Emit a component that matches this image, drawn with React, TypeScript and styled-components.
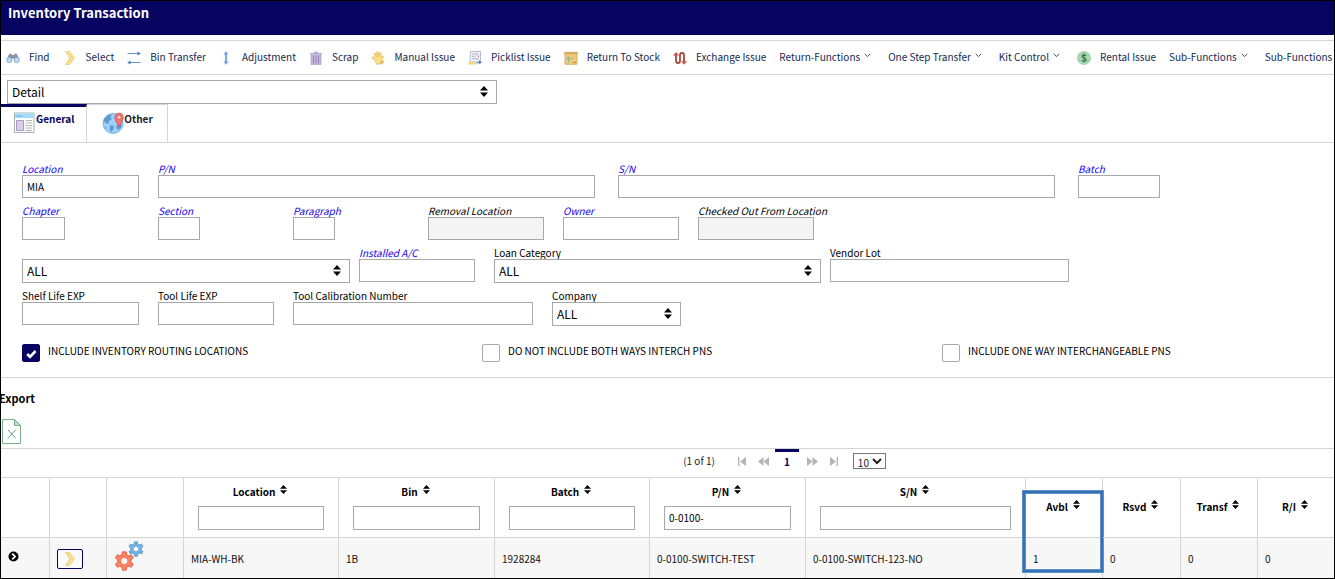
import React, { useId } from "react";
import styled, { createGlobalStyle, css } from "styled-components";

const navy = "#070361";
const line = "#d5d5d5";
const fieldBorder = "#a8a8ac";
const fontStack = `"Noto Sans CJK SC", "Open Sans", sans-serif`;

const GlobalStyle = createGlobalStyle`
  *, *::before, *::after { box-sizing: border-box; }
  body {
    margin: 0;
    background: #fff;
    color: #000;
    font: 10px/12px ${fontStack};
  }
  input, select, button { font: inherit; color: inherit; margin: 0; }
`;

const Frame = styled.div`
  border: 1px solid #000;
  overflow: hidden;
`;

const TitleBar = styled.header`
  height: 34px;
  padding: 3px 7px;
  background: ${navy};
`;

const Title = styled.h1`
  margin: 0;
  color: #fff;
  font-size: 13px;
  line-height: 18px;
  font-weight: 700;
`;

/* Toolbar */

const Toolbar = styled.nav`
  display: flex;
  align-items: center;
  height: 35px;
  margin-top: 5px;
  padding-left: 5px;
  border-top: 1px solid ${line};
  border-bottom: 1px solid ${line};
  overflow: hidden;
`;

const ToolButton = styled.button<{ $menu?: boolean }>`
  display: flex;
  flex: none;
  align-items: center;
  gap: ${(p) => (p.$menu ? 4 : 9)}px;
  padding: 0;
  margin-right: ${(p) => (p.$menu ? 17 : 13)}px;
  border: 0;
  background: none;
  color: #16294f;
  font-size: 10px;
  line-height: 14px;
  white-space: nowrap;
  cursor: pointer;
`;

const ToolLabel = styled.span`
  padding-bottom: 1px;
`;

const MenuChevron = styled.svg`
  width: 7px;
  height: 5px;
  margin-bottom: 4px;
`;

/* Form controls */

const SelectBox = styled.div`
  position: relative;
  width: 100%;
`;

const SelectInput = styled.select`
  display: block;
  width: 100%;
  height: 24px;
  padding: 0 24px 0 4px;
  border: 1px solid ${fieldBorder};
  border-radius: 0;
  background: #fff;
  appearance: none;
  font-size: 12px;
  line-height: 22px;
`;

const SelectArrows = styled.svg`
  position: absolute;
  top: 6px;
  right: 9px;
  width: 8px;
  height: 11px;
  pointer-events: none;
`;

const DetailRow = styled.div`
  max-width: 496px;
  padding: 5px 0 0 6px;
`;

const TextInput = styled.input<{ $tall?: boolean }>`
  display: block;
  width: 100%;
  height: ${(p) => (p.$tall ? 24 : 23)}px;
  padding: 0 4px;
  border: 1px solid ${fieldBorder};
  border-radius: 0;
  background: #fff;
  font-size: 10px;
  font-weight: 400;
  &:disabled { background: #f4f4f4; }
`;

/* Tabs */

const Tabs = styled.div`
  display: flex;
  height: 39px;
  border-bottom: 1px solid ${line};
`;

const Tab = styled.button<{ $active?: boolean }>`
  display: flex;
  align-items: flex-start;
  gap: ${(p) => (p.$active ? 1 : 0)}px;
  padding: ${(p) => (p.$active ? "5px 12px 0 13px" : "7px 14px 0 15px")};
  border: 0;
  border-top: ${(p) => (p.$active ? `3px solid ${navy}` : `1px solid ${line}`)};
  border-right: 1px solid ${line};
  background: #fff;
  color: ${(p) => (p.$active ? navy : "#222")};
  font-size: 10px;
  font-weight: 700;
  line-height: 14px;
  cursor: pointer;
`;

const TabIcon = styled.svg<{ $size: number }>`
  flex: none;
  width: ${(p) => p.$size}px;
  height: ${(p) => p.$size}px;
`;

/* Search form */

const Form = styled.form`
  display: flex;
  flex-direction: column;
  gap: 7px;
  padding: 20px 0 15px 21px;
  border-bottom: 1px solid ${line};
`;

const FormRow = styled.div<{ $cols: number[] }>`
  display: grid;
  grid-template-columns: ${(p) => p.$cols.map((c) => `minmax(0, ${c}fr)`).join(" ")};
  align-items: start;
`;

const FieldCell = styled.div<{ $gap?: number }>`
  padding-right: ${(p) => p.$gap ?? 0}px;
`;

const FieldLabel = styled.label<{ $kind: LabelKind }>`
  display: block;
  height: 12px;
  line-height: 12px;
  white-space: nowrap;
  ${(p) => p.$kind !== "plain" && css`font-style: italic;`}
  ${(p) => p.$kind === "link" && css`color: #1400f0;`}
`;

const CheckRow = styled(FormRow)`
  margin-top: 11px;
`;

const CheckLabel = styled.label`
  display: flex;
  align-items: center;
  gap: 8px;
  line-height: 14px;
  white-space: nowrap;
`;

const CheckText = styled.span`
  padding-bottom: 4px;
`;

const CheckHolder = styled.span`
  position: relative;
  width: 18px;
  height: 18px;
`;

const CheckInput = styled.input`
  display: block;
  width: 18px;
  height: 18px;
  border: 1px solid ${fieldBorder};
  border-radius: 2px;
  background: #fff;
  appearance: none;
  &:checked { background: ${navy}; border-color: ${navy}; }
  &:not(:checked) + svg { display: none; }
`;

const CheckMark = styled.svg`
  position: absolute;
  top: 5px;
  left: 4px;
  width: 11px;
  height: 10px;
  pointer-events: none;
`;

/* Export */

const ExportSection = styled.section`
  height: 71px;
  padding-top: 11px;
  border-bottom: 1px solid ${line};
`;

const ExportTitle = styled.h2`
  margin: 0 0 0 -2px;
  font-size: 11px;
  line-height: 18px;
  font-weight: 700;
`;

const ExportButton = styled.button`
  display: block;
  margin-top: 12px;
  padding: 0 0 0 1px;
  border: 0;
  background: none;
  cursor: pointer;
  svg { display: block; width: 19px; height: 25px; }
`;

/* Paginator */

const Pager = styled.div`
  display: flex;
  justify-content: center;
  align-items: center;
  height: 29px;
  padding-left: 234px;
  border-bottom: 1px solid ${line};
  color: #222;
`;

const PagerStatus = styled.span`
  margin-right: 17px;
  padding-bottom: 5px;
`;

const PagerButton = styled.button`
  display: flex;
  justify-content: center;
  width: 21px;
  padding: 0 0 4px;
  border: 0;
  background: none;
  svg { width: 11px; height: 9px; }
`;

const PageNumber = styled.button`
  width: 24px;
  height: 28px;
  margin: 0 3px 0 1px;
  padding: 0 0 6px;
  border: 0;
  border-top: 3px solid ${navy};
  background: none;
  color: ${navy};
  font-weight: 700;
`;

const PageSize = styled.select`
  width: 33px;
  height: 16px;
  margin: 0 0 4px 9px;
  padding: 0;
  border: 1px solid #767676;
  border-radius: 0;
  background: #fff;
  font-size: 10px;
  line-height: 14px;
`;

/* Results table */

const Table = styled.table`
  width: 100%;
  table-layout: fixed;
  border-collapse: separate;
  border-spacing: 0;
`;

const Col = styled.col<{ $w: number }>`
  width: ${(p) => p.$w}px;
`;

const HeadCell = styled.th`
  position: relative;
  height: 60px;
  padding: 0 14px 2px;
  border-right: 1px solid ${line};
  border-bottom: 1px solid ${line};
  vertical-align: middle;
  &:last-child { border-right: 0; }
`;

const HeadTitle = styled.div`
  display: flex;
  justify-content: center;
  gap: 5px;
  padding-right: 2px;
  font-size: 10px;
  line-height: 16px;
  font-weight: 700;
  svg { flex: none; width: 7px; height: 9px; margin-top: 1px; }
  & + input { margin-top: 6px; }
`;

const Cell = styled.td`
  height: 40px;
  padding: 2px 7px 0;
  border-right: 1px solid ${line};
  background: #f7f7f7;
  color: #111;
  white-space: nowrap;
  vertical-align: middle;
  svg { display: block; }
  &:last-child { border-right: 0; }
`;

const IconCell = styled(Cell)`
  padding-top: 0;
`;

const ExpandButton = styled.button`
  display: block;
  padding: 0 0 3px;
  border: 0;
  background: none;
`;

const SelectRowButton = styled.button`
  display: flex;
  align-items: center;
  justify-content: center;
  width: 26px;
  height: 20px;
  margin-top: 2px;
  padding: 0;
  border: 1px solid ${navy};
  border-radius: 2px;
  background: #fafafa;
`;

const GearsIcon = styled.svg`
  width: 29px;
  height: 30px;
  margin: 0 0 5px 1px;
`;

const Highlight = styled.div`
  position: absolute;
  top: 13px;
  left: -3px;
  right: -1px;
  height: 81px;
  border: 2px solid #3571b3;
  box-shadow: 0 0 0 1px #5d92c8, inset 0 0 0 1px #5d92c8;
  pointer-events: none;
`;

type LabelKind = "plain" | "italic" | "link";

const UpDown = () => (
  <path d="M4 0 L8 4.5 H0 Z M0 6.5 H8 L4 11 Z" fill="#000" />
);

const SortIcon = () => (
  <svg viewBox="0 0 8 11" aria-hidden="true" preserveAspectRatio="none"><UpDown /></svg>
);

function Select({ id, label, value }: { id?: string; label?: string; value: string }) {
  return (
    <SelectBox>
      <SelectInput id={id} aria-label={label} defaultValue={value}>
        <option>{value}</option>
      </SelectInput>
      <SelectArrows viewBox="0 0 8 11" aria-hidden="true"><UpDown /></SelectArrows>
    </SelectBox>
  );
}

interface FieldProps {
  label: string;
  kind?: LabelKind;
  gap?: number;
  value?: string;
  select?: boolean;
  hiddenLabel?: boolean;
  disabled?: boolean;
}

function Field({ label, kind = "plain", gap, value, select, hiddenLabel, disabled }: FieldProps) {
  const id = useId();
  return (
    <FieldCell $gap={gap}>
      <FieldLabel htmlFor={id} $kind={kind}>{hiddenLabel ? "" : label}</FieldLabel>
      {select ? (
        <Select id={id} label={hiddenLabel ? label : undefined} value={value ?? ""} />
      ) : (
        <TextInput id={id} type="text" defaultValue={value} disabled={disabled} />
      )}
    </FieldCell>
  );
}

function Check({ label, checked }: { label: string; checked?: boolean }) {
  return (
    <CheckLabel>
      <CheckHolder>
        <CheckInput type="checkbox" defaultChecked={checked} />
        <CheckMark viewBox="0 0 11 10" aria-hidden="true">
          <path d="M1.2 5 L4 7.8 L9.6 2" fill="none" stroke="#fff" strokeWidth="2.6" />
        </CheckMark>
      </CheckHolder>
      <CheckText>{label}</CheckText>
    </CheckLabel>
  );
}

/* Icons */

const ChevronArrow = () => (
  <svg width="14" height="14" viewBox="0 0 14 14" aria-hidden="true">
    <path d="M2.5 .5 H6.5 L11.5 7 L6.5 13.5 H2.5 L6.8 7 Z" fill="#fbe08b" stroke="#e6c878" strokeWidth=".8" />
  </svg>
);

const icons: Record<string, React.ReactNode> = {
  find: (
    <>
      <path d="M.8 8 L3 3.2 Q4 2 5.4 3 L6.2 4 H7.8 L8.6 3 Q10 2 11 3.2 L13.2 8 L8.5 9 L7.8 7.5 H6.2 L5.5 9 Z" fill="#8495a8" />
      <circle cx="3.3" cy="9" r="2.7" fill="#b8dcf5" stroke="#7d9ab5" strokeWidth=".7" />
      <circle cx="10.7" cy="9" r="2.7" fill="#b8dcf5" stroke="#7d9ab5" strokeWidth=".7" />
    </>
  ),
  transfer: (
    <>
      <path d="M.5 2.5 H11 M3 11.5 H13.5" stroke="#6c93cb" strokeWidth="1" />
      <path d="M10.5 .5 L13.8 2.5 L10.5 4.5 Z M3.5 9.5 L.2 11.5 L3.5 13.5 Z" fill="#4f78b8" />
    </>
  ),
  adjust: (
    <path d="M7 0 L9.6 3.4 H8 V10.6 H9.6 L7 14 L4.4 10.6 H6 V3.4 H4.4 Z" fill="#78a9e3" />
  ),
  trash: (
    <>
      <path d="M1 2 H5 V.8 H9 V2 H13 V3.6 H1 Z" fill="#b5a5cf" />
      <path d="M2 4 H12 V13.6 H2 Z" fill="#c5b6dc" stroke="#a896c4" strokeWidth=".6" />
      <path d="M4.5 5 V12.5 M7 5 V12.5 M9.5 5 V12.5" stroke="#9582b5" strokeWidth=".9" />
    </>
  ),
  hand: (
    <>
      <path d="M4 10 L.8 6.8 Q.9 5.6 2.1 6 L3.9 7.4 L3.2 2.6 Q3.8 1.5 4.7 2.5 L5.6 5.8 L5.7 .9 Q6.5 0 7.2 1 L7.6 5.8 L8.8 1.7 Q9.8 1.1 10.2 2.2 L9.7 6.8 L11.4 4.8 Q12.5 4.7 12.4 5.8 L10.6 10.8 L8.5 13.2 H5.6 Z" fill="#fbe08b" stroke="#dcb75c" strokeWidth=".7" />
      <path d="M8.5 12.8 L11 9.5 L13.6 10.2 L11 13.6 Z" fill="#e3b871" />
    </>
  ),
  picklist: (
    <>
      <path d="M2.5 .5 H12.5 V11 H1.8 Z" fill="#f1f3fa" stroke="#a7afc4" strokeWidth=".8" />
      <path d="M4 3 H7.5 M4 5.3 H7.5 M4 7.6 H7.5" stroke="#9ea6bd" strokeWidth=".8" />
      <path d="M9 2 V4 M10.5 4.5 V6.5 M9 7 V9" stroke="#b27da4" strokeWidth="1" />
      <path d="M.5 11 H8 V13.6 H.5 Z" fill="#f6d77d" />
      <path d="M8 13 Q8.5 10.5 11 10.5 V9 L14 11.2 L11 13.4 V12 Q9.5 12 8 13 Z" fill="#5688cc" />
    </>
  ),
  stock: (
    <>
      <path d="M1 2 H13 V13.3 H1 Z" fill="#f0c87a" stroke="#d0a65c" strokeWidth=".8" />
      <path d="M.3 .8 H13.7 V3.2 H.3 Z" fill="#d6ab62" />
      <path d="M4.5 5 L2 8.3 H4 V11.5 H5.2 V8.3 H9 V7.2 H5.5 Z" fill="#86bd90" />
      <path d="M9.5 11.3 H11.8" stroke="#a97834" strokeWidth="1" />
    </>
  ),
  exchange: (
    <>
      <path d="M3 3 V10 Q3 12 5 12 Q7 12 7 10 V4 Q7 2 9 2 Q11 2 11 4 V11" fill="none" stroke="#a9463f" strokeWidth="1.8" />
      <path d="M0 4.4 L3 1 L6 4.4 Z M8.2 10.2 L11 13.8 L14 10.2 Z" fill="#cf5148" />
    </>
  ),
  rental: (
    <>
      <circle cx="7" cy="7" r="6.6" fill="#a8d7b0" stroke="#83c091" strokeWidth=".8" strokeDasharray="1 .6" />
      <path d="M9.2 4.8 Q8.5 3.9 7 3.9 Q5 3.9 5 5.4 Q5 6.6 7 7 Q9.2 7.4 9.2 8.7 Q9.2 10.2 7 10.2 Q5.4 10.2 4.7 9.2 M7 2.6 V11.4" fill="none" stroke="#32764c" strokeWidth="1.1" />
    </>
  ),
};

const gearPath = (cx: number, cy: number, teeth: number, outer: number, root: number) => {
  const points: string[] = [];
  for (let i = 0; i < teeth; i += 1) {
    const mid = (i / teeth) * Math.PI * 2 - Math.PI / 2;
    [[-0.34, root], [-0.2, outer], [0.2, outer], [0.34, root]].forEach(([offset, r]) => {
      points.push(`${(cx + Math.cos(mid + offset) * r).toFixed(2)} ${(cy + Math.sin(mid + offset) * r).toFixed(2)}`);
    });
  }
  return `M${points.join("L")}Z`;
};

const Gears = () => (
  <GearsIcon viewBox="0 0 29 30" aria-hidden="true">
    <path d={gearPath(21, 8, 6, 7.4, 5.3)} fill="#6fb4e3" stroke="#5695c4" strokeWidth=".8" />
    <circle cx="21" cy="8" r="2.8" fill="#f7f7f7" stroke="#5695c4" strokeWidth=".6" />
    <path d={gearPath(9.3, 20, 6, 9.4, 6.8)} fill="#fb8262" stroke="#e45c41" strokeWidth=".9" />
    <circle cx="9.3" cy="20" r="3.6" fill="#f7f7f7" stroke="#e45c41" strokeWidth=".7" />
  </GearsIcon>
);

const tools: { label: string; icon?: string }[] = [
  { label: "Find", icon: "find" },
  { label: "Select", icon: "select" },
  { label: "Bin Transfer", icon: "transfer" },
  { label: "Adjustment", icon: "adjust" },
  { label: "Scrap", icon: "trash" },
  { label: "Manual Issue", icon: "hand" },
  { label: "Picklist Issue", icon: "picklist" },
  { label: "Return To Stock", icon: "stock" },
  { label: "Exchange Issue", icon: "exchange" },
  { label: "Return-Functions" },
  { label: "One Step Transfer" },
  { label: "Kit Control" },
  { label: "Rental Issue", icon: "rental" },
  { label: "Sub-Functions" },
  { label: "Sub-Functions 2" },
];

const pagerIcons = {
  first: "M1 0 H2.4 V9 H1 Z M9 0 V9 L3 4.5 Z",
  previous: "M5.5 0 V9 L0 4.5 Z M11 0 V9 L5.5 4.5 Z",
  next: "M0 0 V9 L5.5 4.5 Z M5.5 0 V9 L11 4.5 Z",
  last: "M2 0 V9 L8 4.5 Z M8.6 0 H10 V9 H8.6 Z",
};

function PageStep({ label, path }: { label: string; path: string }) {
  return (
    <PagerButton type="button" aria-label={label}>
      <svg viewBox="0 0 11 9" aria-hidden="true"><path d={path} fill="#b5b5b5" /></svg>
    </PagerButton>
  );
}

const columnWidths = [49, 57, 77, 155, 156, 155, 156, 220, 77, 78, 77, 76];

const columns: { title: string; filter?: boolean; value?: string; marked?: boolean; cell: string }[] = [
  { title: "Location", filter: true, cell: "MIA-WH-BK" },
  { title: "Bin", filter: true, cell: "1B" },
  { title: "Batch", filter: true, cell: "1928284" },
  { title: "P/N", filter: true, value: "0-0100-", cell: "0-0100-SWITCH-TEST" },
  { title: "S/N", filter: true, cell: "0-0100-SWITCH-123-NO" },
  { title: "Avbl", marked: true, cell: "1" },
  { title: "Rsvd", cell: "0" },
  { title: "Transf", cell: "0" },
  { title: "R/I", cell: "0" },
];

export default function App() {
  return (
    <>
      <GlobalStyle />
      <Frame>
        <TitleBar><Title>Inventory Transaction</Title></TitleBar>

        <Toolbar aria-label="Actions">
          {tools.map(({ label, icon }) => (
            <ToolButton key={label} type="button" $menu={!icon}>
              {icon === "select" && <ChevronArrow />}
              {icon && icon !== "select" && (
                <svg width="14" height="14" viewBox="0 0 14 14" aria-hidden="true">{icons[icon]}</svg>
              )}
              <ToolLabel>{label}</ToolLabel>
              {!icon && (
                <MenuChevron viewBox="0 0 7 5" aria-hidden="true">
                  <path d="M.7 .8 L3.5 3.6 L6.3 .8" fill="none" stroke="#3b4a6b" strokeWidth="1" />
                </MenuChevron>
              )}
            </ToolButton>
          ))}
        </Toolbar>

        <DetailRow><Select label="View" value="Detail" /></DetailRow>

        <Tabs role="tablist">
          <Tab type="button" role="tab" aria-selected="true" $active>
            <TabIcon $size={21} viewBox="0 0 21 21" aria-hidden="true">
              <path d="M.5 1 H20 V20.5 H.5 Z" fill="#fff" stroke="#a6b0ba" />
              <path d="M1 1.5 H19.5 V6 H1 Z" fill="#a5dcf8" />
              <path d="M2.5 4 H8" stroke="#5b9bc5" strokeDasharray="1.4 .6" />
              <path d="M2.5 8.5 H9.5 V18.5 H2.5 Z" fill="#dccdf0" stroke="#a79bbb" />
              <path d="M11.5 8.5 H18 M11.5 11 H18 M11.5 13.5 H18 M11.5 16 H18 M11.5 18.5 H18" stroke="#b3b3b3" />
            </TabIcon>
            General
          </Tab>
          <Tab type="button" role="tab" aria-selected="false">
            <TabIcon $size={22} viewBox="0 0 22 22" aria-hidden="true">
              <circle cx="11" cy="11.5" r="10" fill="#9fd2fb" stroke="#6fa6d6" strokeWidth=".8" />
              <path d="M2 7 L6 3 L10 2.5 L8.5 5 L10 7 L6.5 9.5 L7.5 12 L4.5 11.5 L2 9.5 Z M8 13 L12 14 L11.5 17 L9 20.5 L7.5 17 Z M15 13 L20 12.5 L19 16 L16 18 L14 15.5 Z M2 14 L4 15 L5 18 Z" fill="#5f9bd3" />
              <path d="M17 14.5 Q12.8 8.5 12.8 5.4 Q13 1.2 17 1 Q21.2 1.2 21.4 5.4 Q21.2 8.5 17 14.5 Z" fill="#f37474" stroke="#cd5252" strokeWidth=".7" />
              <circle cx="17.1" cy="5.3" r="1.8" fill="#fbe3e3" stroke="#cd5252" strokeWidth=".6" />
            </TabIcon>
            Other
          </Tab>
        </Tabs>

        <Form>
          <FormRow $cols={[136, 460, 460, 82, 174]}>
            <Field label="Location" kind="link" gap={19} value="MIA" />
            <Field label="P/N" kind="link" gap={23} />
            <Field label="S/N" kind="link" gap={23} />
            <Field label="Batch" kind="link" />
          </FormRow>
          <FormRow $cols={[136, 135, 135, 135, 135, 135, 501]}>
            <Field label="Chapter" kind="link" gap={93} />
            <Field label="Section" kind="link" gap={93} />
            <Field label="Paragraph" kind="link" gap={93} />
            <Field label="Removal Location" kind="italic" gap={19} disabled />
            <Field label="Owner" kind="link" gap={19} />
            <Field label="Checked Out From Location" kind="italic" gap={19} disabled />
          </FormRow>
          <FormRow $cols={[337, 135, 336, 239, 265]}>
            <Field label="Category" hiddenLabel select value="ALL" gap={9} />
            <Field label="Installed A/C" kind="link" gap={19} />
            <Field label="Loan Category" select value="ALL" gap={9} />
            <Field label="Vendor Lot" />
          </FormRow>
          <FormRow $cols={[136, 135, 259, 129, 653]}>
            <Field label="Shelf Life EXP" gap={19} />
            <Field label="Tool Life EXP" gap={19} />
            <Field label="Tool Calibration Number" gap={19} />
            <Field label="Company" select value="ALL" />
          </FormRow>
          <CheckRow $cols={[460, 460, 392]}>
            <Check label="INCLUDE INVENTORY ROUTING LOCATIONS" checked />
            <Check label="DO NOT INCLUDE BOTH WAYS INTERCH PNS" />
            <Check label="INCLUDE ONE WAY INTERCHANGEABLE PNS" />
          </CheckRow>
        </Form>

        <ExportSection>
          <ExportTitle>Export</ExportTitle>
          <ExportButton type="button" aria-label="Export to Excel">
            <svg viewBox="0 0 19 25" aria-hidden="true">
              <path d="M.5 .5 H12.5 L18.5 6.5 V24.5 H.5 Z" fill="#fff" stroke="#7bb08c" />
              <path d="M12.5 .5 V6.5 H18.5 Z" fill="#b5dfbf" stroke="#7bb08c" />
              <path d="M6 11 L13.5 19 M14 10.5 L5.5 19.5" fill="none" stroke="#62a079" />
            </svg>
          </ExportButton>
        </ExportSection>

        <Pager>
          <PagerStatus>(1 of 1)</PagerStatus>
          <PageStep label="First page" path={pagerIcons.first} />
          <PageStep label="Previous page" path={pagerIcons.previous} />
          <PageNumber type="button">1</PageNumber>
          <PageStep label="Next page" path={pagerIcons.next} />
          <PageStep label="Last page" path={pagerIcons.last} />
          <PageSize aria-label="Rows per page" defaultValue="10"><option>10</option></PageSize>
        </Pager>

        <Table>
          <colgroup>{columnWidths.map((w, i) => <Col key={i} $w={w} />)}</colgroup>
          <thead>
            <tr>
              <HeadCell /><HeadCell /><HeadCell />
              {columns.map((c) => (
                <HeadCell key={c.title} scope="col">
                  <HeadTitle>{c.title}<SortIcon /></HeadTitle>
                  {c.filter && <TextInput $tall type="text" aria-label={`Filter ${c.title}`} defaultValue={c.value} />}
                  {c.marked && <Highlight />}
                </HeadCell>
              ))}
            </tr>
          </thead>
          <tbody>
            <tr>
              <IconCell>
                <ExpandButton type="button" aria-label="Expand row">
                  <svg width="11" height="11" viewBox="0 0 11 11" aria-hidden="true">
                    <circle cx="5.5" cy="5.5" r="5" fill="#000" />
                    <path d="M4.2 2.6 L7.1 5.5 L4.2 8.4" fill="none" stroke="#fff" strokeWidth="1.7" />
                  </svg>
                </ExpandButton>
              </IconCell>
              <IconCell>
                <SelectRowButton type="button" aria-label="Select row"><ChevronArrow /></SelectRowButton>
              </IconCell>
              <IconCell><Gears /></IconCell>
              {columns.map((c) => <Cell key={c.title}>{c.cell}</Cell>)}
            </tr>
          </tbody>
        </Table>
      </Frame>
    </>
  );
}
